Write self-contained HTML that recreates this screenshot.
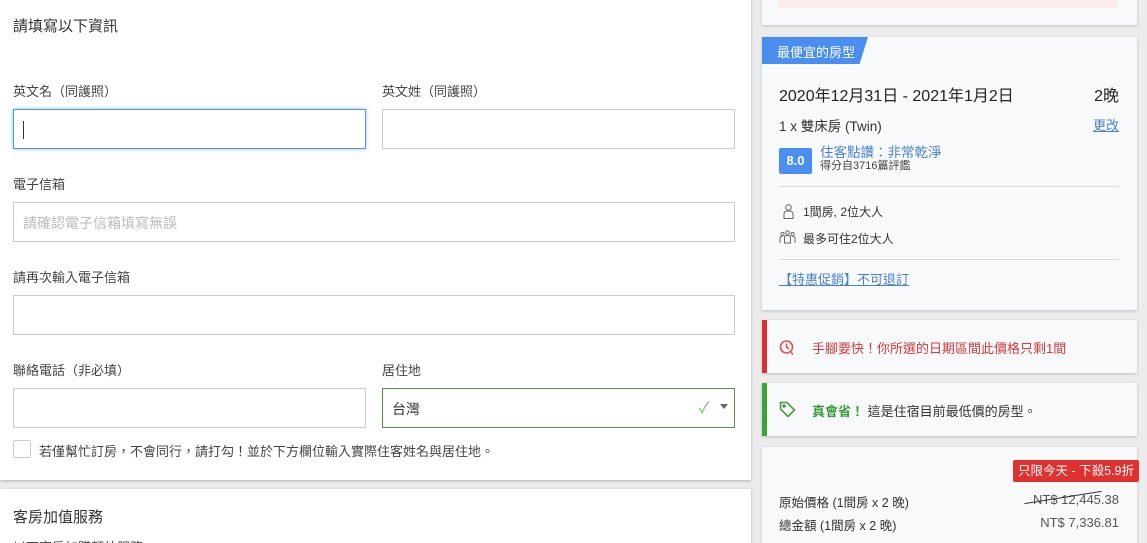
<!DOCTYPE html>
<html><head><meta charset="utf-8"><style>
*{box-sizing:border-box;margin:0;padding:0}
html,body{width:1147px;height:543px;overflow:hidden}
body{background:#ececec;font-family:"Liberation Sans","Noto Sans CJK TC",sans-serif;color:#333;position:relative}
.a{position:absolute}
.card{position:absolute;background:#fff;box-shadow:0 1px 3px rgba(0,0,0,.25)}
.rc{position:absolute;background:#f8f9fb;box-shadow:0 1px 3px rgba(0,0,0,.2);left:762px;width:375px}
.lbl{position:absolute;font-size:13px;color:#444}
.inp{position:absolute;border:1px solid #ccc;background:#fff;height:40px}
</style></head><body>
<div class="card" style="left:0;top:-5px;width:751px;height:485px"></div>
<div class="a" style="left:13px;top:15px;font-size:15px;color:#333">請填寫以下資訊</div>
<div class="lbl" style="left:13px;top:81px">英文名（同護照）</div>
<div class="lbl" style="left:382px;top:81px">英文姓（同護照）</div>
<div class="inp" style="left:13px;top:109px;width:353px;border-color:#5b8fd9;box-shadow:0 0 4px rgba(66,133,244,.5)"><div class="a" style="left:9px;top:11px;width:1px;height:18px;background:#333"></div></div>
<div class="inp" style="left:382px;top:109px;width:353px"></div>
<div class="lbl" style="left:13px;top:174px">電子信箱</div>
<div class="inp" style="left:13px;top:202px;width:722px"><div class="a" style="left:9px;top:10px;font-size:14px;color:#bbb">請確認電子信箱填寫無誤</div></div>
<div class="lbl" style="left:13px;top:267px">請再次輸入電子信箱</div>
<div class="inp" style="left:13px;top:295px;width:722px"></div>
<div class="lbl" style="left:13px;top:360px">聯絡電話（非必填）</div>
<div class="lbl" style="left:382px;top:360px">居住地</div>
<div class="inp" style="left:13px;top:388px;width:353px"></div>
<div class="inp" style="left:382px;top:388px;width:353px;border-color:#4a9a3f"><div class="a" style="left:9px;top:10px;font-size:14px;color:#333">台灣</div><div class="a" style="left:316px;top:8px;font-size:15px;color:#6bbf5f">✓</div><div class="a" style="left:337px;top:15px;width:0;height:0;border-left:4px solid transparent;border-right:4px solid transparent;border-top:5px solid #666"></div></div>
<div class="a" style="left:13px;top:440px;width:18px;height:18px;border:1px solid #ccc;border-radius:2px;background:#fff"></div>
<div class="a" style="left:39px;top:441px;font-size:13px;color:#444">若僅幫忙訂房，不會同行，請打勾！並於下方欄位輸入實際住客姓名與居住地。</div>
<div class="card" style="left:0;top:489px;width:751px;height:60px"></div>
<div class="a" style="left:13px;top:506px;font-size:15px;color:#333">客房加值服務</div>
<div class="a" style="left:13px;top:537px;font-size:13px;color:#444">以下客房加購額外服務</div>

<div class="rc" style="top:-5px;height:30px"><div class="a" style="left:16px;top:0;width:340px;height:13px;background:#fcecec"></div></div>
<div class="rc" style="top:37px;height:273px">
<div class="a" style="left:0;top:0;width:106px;height:27px;background:#4a8ef0;clip-path:polygon(0 0,100% 0,92% 100%,0 100%)"></div>
<div class="a" style="left:15px;top:5px;font-size:13px;color:#fff">最便宜的房型</div>
<div class="a" style="left:17px;top:45px;font-size:16px;color:#222">2020年12月31日 - 2021年1月2日</div>
<div class="a" style="right:18px;top:45px;font-size:16px;color:#222">2晚</div>
<div class="a" style="left:17px;top:78px;font-size:13.5px;color:#333">1 x 雙床房 (Twin)</div>
<div class="a" style="right:18px;top:78px;font-size:13px;color:#4a80d0;text-decoration:underline">更改</div>
<div class="a" style="left:17px;top:111px;width:33px;height:26px;background:#4a8ef0;border-radius:2px;color:#fff;font-size:13px;font-weight:bold;text-align:center;line-height:26px">8.0</div>
<div class="a" style="left:58px;top:104px;font-size:13.5px;color:#4a80d0">住客點讚：非常乾淨</div>
<div class="a" style="left:58px;top:120px;font-size:11px;color:#444">得分自3716篇評鑑</div>
<div class="a" style="left:17px;top:149px;width:340px;height:1px;background:#ddd"></div>
<svg class="a" style="left:21px;top:167px" width="11" height="15" viewBox="0 0 11 15" fill="none" stroke="#666"><circle cx="5.5" cy="3.5" r="2.8"/><path d="M1 14.5V10q0-3 4.5-3t4.5 3v4.5z"/></svg>
<div class="a" style="left:41px;top:166px;font-size:12px;color:#333">1間房, 2位大人</div>
<svg class="a" style="left:17px;top:193px" width="17" height="14" viewBox="0 0 17 14" fill="none" stroke="#666"><circle cx="3.5" cy="4" r="1.6"/><circle cx="8.5" cy="2.5" r="1.8"/><circle cx="13.5" cy="4" r="1.6"/><path d="M1 13V8q0-1.5 2.5-1.5M16 13V8q0-1.5-2.5-1.5M5.5 13V7q0-1.5 3-1.5t3 1.5v6z"/></svg>
<div class="a" style="left:41px;top:193px;font-size:12px;color:#333">最多可住2位大人</div>
<div class="a" style="left:17px;top:222px;width:340px;height:1px;background:#ddd"></div>
<div class="a" style="left:17px;top:232px;font-size:13px;color:#4a80d0;text-decoration:underline">【特惠促銷】不可退訂</div>
</div>
<div class="rc" style="top:320px;height:53px;border-left:5px solid #d9302e">
<svg class="a" style="left:12px;top:19px" width="16" height="16" viewBox="0 0 16 16" fill="none" stroke="#d9534f" stroke-width="1.6"><circle cx="7.5" cy="8" r="6"/><path d="M7.5 4.5V8l2.5 2M12 13.5l2 2"/></svg>
<div class="a" style="left:45px;top:18px;font-size:13px;color:#d33b3b">手腳要快！你所選的日期區間此價格只剩1間</div>
</div>
<div class="rc" style="top:383px;height:53px;border-left:5px solid #3aa33a">
<svg class="a" style="left:12px;top:18px" width="17" height="17" viewBox="0 0 17 17" fill="none" stroke="#4a9a3f" stroke-width="1.6"><path d="M1.5 1.5h6.5l7.5 7.5-6.5 6.5L1.5 8z"/><circle cx="5" cy="5" r="1"/></svg>
<div class="a" style="left:45px;top:18px;font-size:13px;color:#333"><span style="color:#3a9a3a;font-weight:bold">真會省！</span> 這是住宿目前最低價的房型。</div>
</div>
<div class="rc" style="top:447px;height:100px">
<div class="a" style="left:251px;top:13px;width:126px;height:22px;background:#e03131;border-radius:2px;color:#fff;font-size:12.5px;text-align:center;line-height:22px">只限今天 - 下殺5.9折</div>
<div class="a" style="left:17px;top:45px;font-size:12.5px;color:#333">原始價格 (1間房 x 2 晚)</div>
<div class="a" style="right:18px;top:45px;font-size:13px;color:#555">NT$ 12,445.38</div>
<div class="a" style="left:262px;top:50px;width:78px;height:1px;background:#333;transform:rotate(-9deg)"></div>
<div class="a" style="left:17px;top:68px;font-size:12.5px;color:#333">總金額 (1間房 x 2 晚)</div>
<div class="a" style="right:18px;top:68px;font-size:13px;color:#555">NT$ 7,336.81</div>
</div>
</body></html>
